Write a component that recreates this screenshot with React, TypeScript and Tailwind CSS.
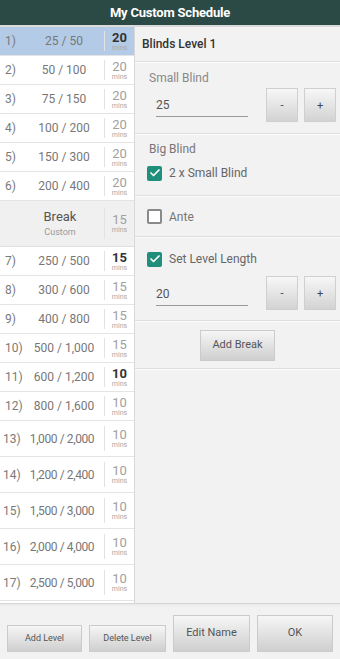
import { Check } from 'lucide-react';

type Level = { n: string; blinds: string; mins: string; bold?: boolean; h: string };

const top: Level[] = [
  { n: '1)', blinds: '25 / 50', mins: '20', bold: true, h: 'h-[29px]' },
  { n: '2)', blinds: '50 / 100', mins: '20', h: 'h-[29px]' },
  { n: '3)', blinds: '75 / 150', mins: '20', h: 'h-[29px]' },
  { n: '4)', blinds: '100 / 200', mins: '20', h: 'h-[29px]' },
  { n: '5)', blinds: '150 / 300', mins: '20', h: 'h-[29px]' },
  { n: '6)', blinds: '200 / 400', mins: '20', h: 'h-[29px]' },
];

const rest: Level[] = [
  { n: '7)', blinds: '250 / 500', mins: '15', bold: true, h: 'h-[29px]' },
  { n: '8)', blinds: '300 / 600', mins: '15', h: 'h-[29px]' },
  { n: '9)', blinds: '400 / 800', mins: '15', h: 'h-[29px]' },
  { n: '10)', blinds: '500 / 1,000', mins: '15', h: 'h-[29px]' },
  { n: '11)', blinds: '600 / 1,200', mins: '10', bold: true, h: 'h-[29px]' },
  { n: '12)', blinds: '800 / 1,600', mins: '10', h: 'h-[29px]' },
  { n: '13)', blinds: '1,000 / 2,000', mins: '10', h: 'h-[36px]' },
  { n: '14)', blinds: '1,200 / 2,400', mins: '10', h: 'h-[36px]' },
  { n: '15)', blinds: '1,500 / 3,000', mins: '10', h: 'h-[36px]' },
  { n: '16)', blinds: '2,000 / 4,000', mins: '10', h: 'h-[36px]' },
  { n: '17)', blinds: '2,500 / 5,000', mins: '10', h: 'h-[36px]' },
];

function Mins({ mins, bold }: { mins: string; bold?: boolean }) {
  return (
    <div className="w-[30px] h-full flex items-center">
      <div className="w-px h-[70%] bg-[#e2e2e2]" />
      <div className="flex-1 flex flex-col items-center leading-none">
        <span className={`text-[13px] ${bold ? 'font-bold text-[#333]' : 'text-[#a0a0a0]'}`}>{mins}</span>
        <span className="text-[7px] mt-[1px] text-[#a8a8a8]">mins</span>
      </div>
    </div>
  );
}

function Row({ lvl, selected = false }: { lvl: Level; selected?: boolean }) {
  const long = lvl.blinds.length > 11;
  return (
    <div className={`${lvl.h} flex items-center border-b border-[#e4e4e4] ${selected ? 'bg-[#b3cbe6]' : 'bg-white'}`}>
      <div className="flex-1 flex items-center h-full">
        <span className={`${long ? 'w-[20px] pl-[3px]' : 'w-[24px] pl-[5px]'} text-[12px] text-[#7a7a7a]`}>{lvl.n}</span>
        <span className={`flex-1 text-center text-[12px] text-[#777] ${long ? 'tracking-[-0.4px]' : ''}`}>
          {lvl.blinds}
        </span>
      </div>
      <Mins mins={lvl.mins} bold={lvl.bold} />
    </div>
  );
}

function Box({ checked }: { checked: boolean }) {
  return checked ? (
    <span className="w-[15px] h-[15px] rounded-[2px] bg-[#1f8f7c] flex items-center justify-center">
      <Check size={12} strokeWidth={3.5} className="text-white" />
    </span>
  ) : (
    <span className="w-[15px] h-[15px] rounded-[2px] border-2 border-[#8a8a8a] bg-white" />
  );
}

function StepBtn({ label }: { label: string }) {
  return (
    <button className="w-[32px] h-[34px] border border-[#cfcfcf] bg-gradient-to-b from-[#f7f7f7] to-[#d3d3d3] text-[11px] text-[#444] leading-none">
      {label}
    </button>
  );
}

function GrayBtn({ label, className }: { label: string; className: string }) {
  return (
    <button className={`border border-[#cbcbcb] bg-gradient-to-b from-[#f6f6f6] to-[#cfcfcf] text-[#555] ${className}`}>
      {label}
    </button>
  );
}

function Divider() {
  return <div className="h-[2px] border-t border-[#dedede] bg-white/70" />;
}

export default function App() {
  return (
    <div className="w-[340px] h-[659px] bg-[#f2f2f2] flex flex-col overflow-hidden font-['Roboto',sans-serif]">
      <div className="h-[25px] bg-[#2c4a45] flex items-center justify-center text-white font-bold text-[13px] tracking-[-0.2px]">
        My Custom Schedule
      </div>
      <div className="h-[2px] bg-[#dadada]" />

      <div className="flex h-[576px]">
        {/* level list */}
        <div className="w-[135px] border-r border-[#d8d8d8] bg-white flex flex-col">
          <Row lvl={top[0]} selected />
          {top.slice(1).map(l => <Row key={l.n} lvl={l} />)}
          <div className="h-[46px] flex items-center bg-[#f0f0f0] border-b border-[#e0e0e0]">
            <div className="flex-1 flex flex-col items-center pl-[16px] leading-none">
              <span className="text-[13px] text-[#555]">Break</span>
              <span className="text-[9px] text-[#999] mt-[5px]">Custom</span>
            </div>
            <Mins mins="15" />
          </div>
          {rest.map(l => <Row key={l.n} lvl={l} />)}
        </div>

        {/* level editor */}
        <div className="flex-1 flex flex-col text-[12px]">
          <div className="h-[34px] flex items-center pl-[7px] text-[#333] font-medium">Blinds Level 1</div>
          <Divider />

          <div className="h-[70px] pl-[14px] pr-[4px] pt-[6px]">
            <div className="text-[#888]">Small Blind</div>
            <div className="flex items-center mt-[1px]">
              <div className="w-[92px] ml-[7px] border-b border-[#999] text-[#555] pb-[2px] mt-[3px]">25</div>
              <div className="ml-auto flex gap-[6px]">
                <StepBtn label="-" />
                <StepBtn label="+" />
              </div>
            </div>
          </div>
          <Divider />

          <div className="h-[60px] pl-[12px] pt-[5px]">
            <div className="text-[#777] pl-[2px]">Big Blind</div>
            <div className="flex items-center gap-[7px] mt-[6px]">
              <Box checked />
              <span className="text-[#666]">2 x Small Blind</span>
            </div>
          </div>
          <Divider />

          <div className="h-[39px] pl-[12px] flex items-center gap-[7px]">
            <Box checked={false} />
            <span className="text-[#777]">Ante</span>
          </div>
          <Divider />

          <div className="h-[82px] pl-[12px] pr-[4px] pt-[12px]">
            <div className="flex items-center gap-[7px]">
              <Box checked />
              <span className="text-[#666]">Set Level Length</span>
            </div>
            <div className="flex items-center mt-[8px]">
              <div className="w-[92px] ml-[9px] border-b border-[#999] text-[#555] pb-[2px] mt-[4px]">20</div>
              <div className="ml-auto flex gap-[6px]">
                <StepBtn label="-" />
                <StepBtn label="+" />
              </div>
            </div>
          </div>
          <Divider />

          <div className="h-[46px] flex items-center justify-center">
            <GrayBtn label="Add Break" className="w-[75px] h-[31px] text-[11px]" />
          </div>
          <Divider />
        </div>
      </div>

      <div className="h-[3px] border-t border-[#d4d4d4] bg-[#ececec]" />

      <div className="flex-1 flex items-end gap-[7px] px-[7px] pb-[7px]">
        <GrayBtn label="Add Level" className="w-[75px] h-[27px] text-[9px]" />
        <GrayBtn label="Delete Level" className="w-[77px] h-[27px] text-[9px]" />
        <GrayBtn label="Edit Name" className="w-[77px] h-[37px] text-[11px]" />
        <GrayBtn label="OK" className="w-[76px] h-[37px] text-[11px]" />
      </div>
    </div>
  );
}
